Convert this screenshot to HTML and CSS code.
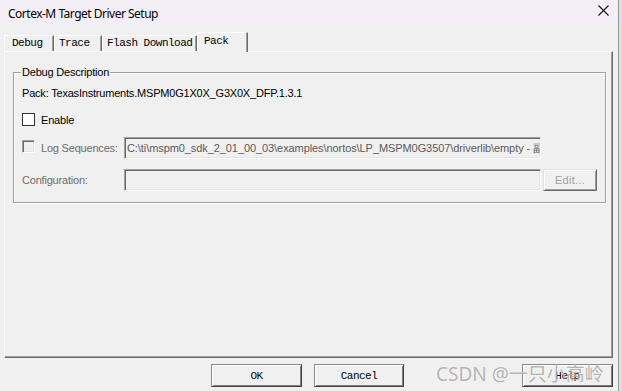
FILE: index.html
```html
<!DOCTYPE html>
<html lang="en">
<head>
  <meta charset="UTF-8">
  <title>Cortex-M Target Driver Setup</title>
  <link rel="stylesheet" href="styles.css">
</head>
<body>
  <div class="window">
    <!-- Title bar -->
    <div class="titlebar">
      <span class="title">Cortex-M Target Driver Setup</span>
      <svg class="close" width="11" height="11" viewBox="0 0 11 11">
        <path d="M0.5 0.5 L10.5 10.5 M10.5 0.5 L0.5 10.5" stroke="#111" stroke-width="1.1" fill="none"/>
      </svg>
    </div>

    <!-- Tabs -->
    <div class="tabs">
      <div class="tab tab-debug">Debug</div>
      <div class="tab tab-trace">Trace</div>
      <div class="tab tab-flash">Flash Download</div>
      <div class="tab tab-pack active">Pack</div>
    </div>

    <div class="panel">
      <div class="group">
        <div class="group-title">Debug Description</div>
        <div class="pack-line">Pack: TexasInstruments.MSPM0G1X0X_G3X0X_DFP.1.3.1</div>

        <div class="row row-enable">
          <span class="check"></span>
          <span class="check-label">Enable</span>
        </div>

        <div class="row row-log">
          <div class="label-cell">
            <span class="check disabled"></span>
            <span class="check-label muted">Log Sequences:</span>
          </div>
          <div class="field"><span class="field-text">C:\ti\mspm0_sdk_2_01_00_03\examples\nortos\LP_MSPM0G3507\driverlib\empty - 副本\Debug</span></div>
        </div>

        <div class="row row-config">
          <div class="label-cell">
            <span class="muted">Configuration:</span>
          </div>
          <div class="field"></div>
          <button class="edit-btn">Edit...</button>
        </div>
      </div>
    </div>

    <!-- Dialog buttons -->
    <div class="buttons">
      <button class="btn btn-ok">OK</button>
      <button class="btn btn-cancel">Cancel</button>
      <button class="btn btn-help">Help</button>
    </div>

    <div class="watermark">CSDN @一只小高岭</div>
  </div>
</body>
</html>
```

FILE: styles.css
```css
* {
  box-sizing: border-box;
}

body {
  margin: 0;
  background-color: #dedede;
  font-family: "Liberation Sans", Arial, sans-serif;
  font-size: 11px;
  letter-spacing: -0.2px;
  color: #000;
}

.window {
  position: relative;
  width: 619px;
  height: 391px;
  background-color: #f0f0f0;
  border-right: 1px solid #9a9a9a;
  overflow: hidden;
}

/* Title bar */
.titlebar {
  display: flex;
  height: 26px;
  padding-left: 8px;
  align-items: center;
  background-color: #f4eff6;
}

.title {
  font-family: "Noto Sans", sans-serif;
  font-size: 12px;
  letter-spacing: -0.5px;
  color: #000;
}

.close {
  margin-left: auto;
  margin-right: 9px;
  align-self: flex-start;
  margin-top: 5px;
}

/* Tabs */
.tabs {
  display: flex;
  align-items: flex-end;
  height: 25px;
  padding-left: 4px;
}

.tab {
  height: 16px;
  line-height: 15px;
  padding-left: 6px;
  font-family: "Liberation Mono", monospace;
  font-size: 11px;
  letter-spacing: -0.5px;
  background-color: #f0f0f0;
  border-top: 1px solid #fff;
  border-left: 1px solid #fff;
  border-right: 1px solid #696969;
  box-shadow: inset -1px 0 0 #a0a0a0;
  white-space: nowrap;
}

.tab-debug { width: 50px; padding-left: 7px; }
.tab-trace { width: 48px; padding-left: 4px; }
.tab-flash { width: 95px; padding-left: 4px; }
.tab-pack  { width: 51px; }

.tab.active {
  position: relative;
  z-index: 1;
  height: 20px;
  line-height: 17px;
  margin-bottom: -1px;
}

/* Tab page */
.panel {
  margin-left: 4px;
  width: 609px;
  height: 307px;
  padding: 20px 6px 0 8px;
  border-top: 1px solid #fff;
  border-left: 1px solid #fff;
  border-right: 1px solid #696969;
  border-bottom: 1px solid #696969;
  box-shadow: inset -1px -1px 0 #a0a0a0;
}

.group {
  border: 1px solid #a0a0a0;
  box-shadow: 1px 1px 0 #fff, inset 1px 1px 0 #fff;
  padding: 0 0 11px 8px;
}

.group-title {
  display: table;
  margin-top: -7px;
  line-height: 13px;
  padding: 0 1px;
  margin-left: -1px;
  background-color: #f0f0f0;
}

.pack-line {
  margin-top: 8px;
  line-height: 13px;
}

.row {
  display: flex;
  align-items: center;
}

.row-enable {
  margin-top: 13px;
  height: 13px;
}

.row-log {
  margin-top: 11px;
}

.row-config {
  margin-top: 10px;
}

.label-cell {
  display: flex;
  align-items: center;
  width: 102px;
}

.check {
  display: inline-block;
  width: 13px;
  height: 13px;
  border: 1px solid #333;
  background-color: #fff;
}

.check.disabled {
  border-color: #a0a0a0 #fff #fff #a0a0a0;
  box-shadow: inset 1px 1px 0 #696969, inset -1px -1px 0 #e3e3e3;
  background-color: #f0f0f0;
  margin-top: -3px;
}

.check-label {
  margin-left: 6px;
}

.muted {
  color: #6d6d6d;
}

.field {
  width: 417px;
  height: 22px;
  padding: 0 0 0 2px;
  line-height: 20px;
  letter-spacing: -0.08px;
  border: 1px solid;
  border-color: #a0a0a0 #fff #fff #a0a0a0;
  box-shadow: inset 1px 1px 0 #696969, inset -1px -1px 0 #e3e3e3;
  background-color: #f0f0f0;
  color: #5a5a5a;
  white-space: nowrap;
  overflow: hidden;
}

.edit-btn {
  margin-left: 2px;
  width: 54px;
  height: 22px;
  padding: 0;
  font-family: "Liberation Sans", Arial, sans-serif;
  font-size: 11px;
  letter-spacing: 0.3px;
  color: #a0a0a0;
  background-color: #f0f0f0;
  border: 1px solid;
  border-color: #e3e3e3 #696969 #696969 #e3e3e3;
  box-shadow: inset 1px 1px 0 #fff, inset -1px -1px 0 #a0a0a0;
}

/* Bottom buttons */
.buttons {
  display: flex;
  margin-top: 6px;
}

.btn {
  height: 23px;
  padding: 0;
  font-family: "Liberation Mono", monospace;
  font-size: 11px;
  letter-spacing: -0.5px;
  color: #000;
  background-color: #f0f0f0;
  border: 1px solid;
  border-color: #8a8a8a #404040 #404040 #8a8a8a;
  box-shadow: inset 1px 1px 0 #fff, inset -1px -1px 0 #808080;
}

.btn-ok { margin-left: 211px; width: 91px; }
.btn-cancel { margin-left: 12px; width: 90px; }
.btn-help { margin-left: 118px; width: 91px; }

/* Watermark overlay */
.watermark {
  position: absolute;
  left: 436px;
  top: 359px;
  font-family: "Noto Sans", "Noto Sans CJK SC", sans-serif;
  font-size: 19px;
  letter-spacing: 0;
  color: rgba(140, 140, 140, 0.65);
  text-shadow: 0 0 1px rgba(255, 255, 255, 0.8);
  white-space: nowrap;
}
```
